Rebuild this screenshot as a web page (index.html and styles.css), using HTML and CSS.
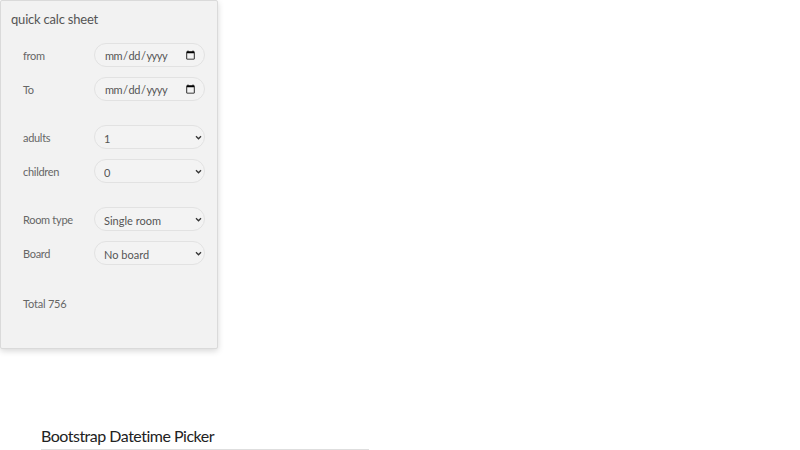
FILE: index.html
```html
<!DOCTYPE html>
<html>
<head>
<meta charset="utf-8">
<link rel="stylesheet" href="styles.css">
</head>
<body>
<div class="card">
  <div class="card-title">quick calc sheet</div>
  <div class="group">
    <label class="row"><span class="lbl">from</span><input class="ctl date" type="date"></label>
    <label class="row"><span class="lbl">To</span><input class="ctl date" type="date"></label>
  </div>
  <div class="group">
    <label class="row"><span class="lbl">adults</span><span class="sel"><select class="ctl"><option>1</option><option>2</option></select><svg class="chev" viewBox="0 0 8 6" width="7" height="5"><path d="M1 1.5 L4 4.5 L7 1.5" fill="none" stroke="#333" stroke-width="1.6"/></svg></span></label>
    <label class="row"><span class="lbl">children</span><span class="sel"><select class="ctl"><option>0</option><option>1</option></select><svg class="chev" viewBox="0 0 8 6" width="7" height="5"><path d="M1 1.5 L4 4.5 L7 1.5" fill="none" stroke="#333" stroke-width="1.6"/></svg></span></label>
  </div>
  <div class="group">
    <label class="row"><span class="lbl">Room type</span><span class="sel"><select class="ctl"><option>Single room</option><option>Double room</option></select><svg class="chev" viewBox="0 0 8 6" width="7" height="5"><path d="M1 1.5 L4 4.5 L7 1.5" fill="none" stroke="#333" stroke-width="1.6"/></svg></span></label>
    <label class="row"><span class="lbl">Board</span><span class="sel"><select class="ctl"><option>No board</option><option>Half board</option></select><svg class="chev" viewBox="0 0 8 6" width="7" height="5"><path d="M1 1.5 L4 4.5 L7 1.5" fill="none" stroke="#333" stroke-width="1.6"/></svg></span></label>
  </div>
  <div class="total">Total 756</div>
</div>
<div class="section">
  <h3 class="section-title">Bootstrap Datetime Picker</h3>
</div>
</body>
</html>
```

FILE: styles.css
```css
html, body {
  margin: 0;
  padding: 0;
  background: #ffffff;
  font-family: Lato, "Open Sans", "Liberation Sans", sans-serif;
}
.card {
  box-sizing: border-box;
  width: 218px;
  height: 349px;
  background: #f2f2f2;
  border: 1px solid #dadada;
  border-radius: 2px;
  box-shadow: 0 2px 6px rgba(0,0,0,0.16);
  padding: 9px 12px 0 10px;
  display: flex;
  flex-direction: column;
}
.card-title {
  font-size: 13px;
  line-height: 18px;
  letter-spacing: -0.2px;
  color: #555;
  margin-bottom: 15px;
}
.group {
  display: flex;
  flex-direction: column;
  gap: 10px;
  margin-bottom: 24px;
}
.row {
  display: flex;
  align-items: center;
  height: 24px;
  padding-left: 12px;
}
.lbl {
  width: 71px;
  font-size: 11px;
  letter-spacing: -0.3px;
  color: #666;
}
.ctl {
  box-sizing: border-box;
  width: 111px;
  height: 24px;
  border: 1px solid #e2e2e2;
  border-radius: 12px;
  background: #f3f3f3;
  font-family: inherit;
  font-size: 11px;
  color: #555;
  padding: 0 8px 0 9px;
  outline: none;
  margin: 0;
}
.date {
  letter-spacing: -0.5px;
}
input.ctl::-webkit-calendar-picker-indicator {
  margin-left: 0;
  padding: 0;
}
.sel {
  position: relative;
  display: block;
  width: 111px;
  height: 24px;
}
select.ctl {
  -webkit-appearance: none;
  appearance: none;
  padding-top: 2px;
}
.chev {
  position: absolute;
  right: 3px;
  top: 10px;
  pointer-events: none;
}
.total {
  margin-top: 3px;
  padding-left: 12px;
  font-size: 11px;
  line-height: 24px;
  letter-spacing: -0.2px;
  color: #666;
}
.section {
  margin: 77px 0 0 41px;
  width: 328px;
}
.section-title {
  margin: 0;
  font-size: 16px;
  font-weight: 400;
  line-height: 20px;
  letter-spacing: -0.5px;
  color: #222;
  padding-bottom: 3px;
  border-bottom: 1px solid #dedede;
}
```
